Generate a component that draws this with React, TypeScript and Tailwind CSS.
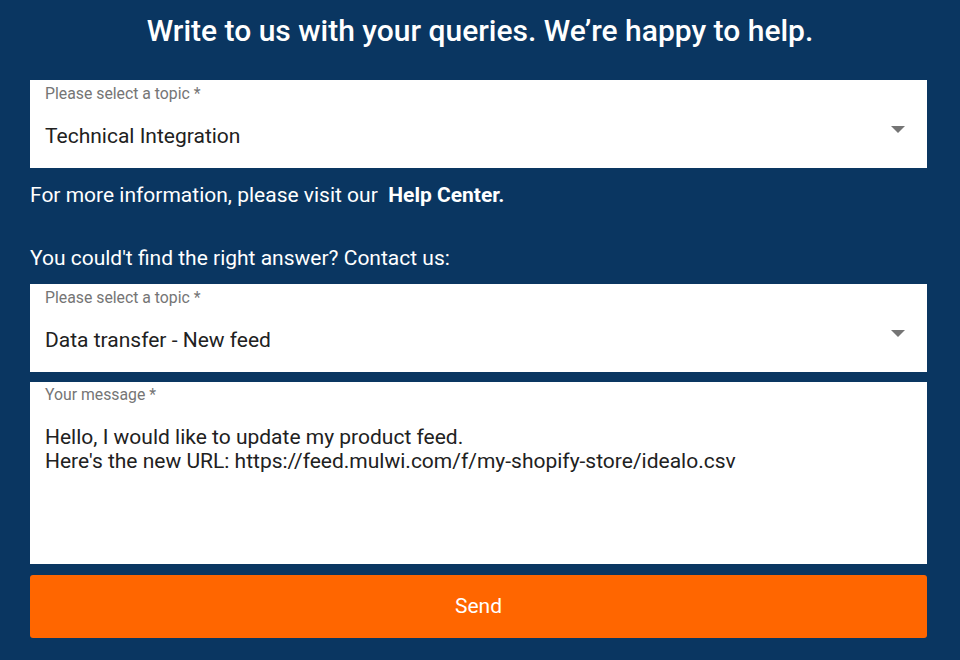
import React from 'react';

const font = { fontFamily: 'Roboto, "Liberation Sans", sans-serif' };

function Arrow() {
  return (
    <svg width="14" height="7" viewBox="0 0 14 7" className="absolute right-[22px] top-[46px]">
      <path d="M0 0 L14 0 L7 7 Z" fill="#757575" />
    </svg>
  );
}

function FakeSelect({ label, value }: { label: string; value: string }) {
  return (
    <div className="relative h-[88px] w-full bg-white">
      <div className="pl-[15px] pt-[4px] text-[15.8px] leading-[19px] text-[#757575]">{label}</div>
      <div className="pl-[15px] pt-[21px] text-[21px] leading-[25px] text-[#212121]">{value}</div>
      <Arrow />
    </div>
  );
}

export default function App() {
  return (
    <div className="min-h-[660px] w-[960px] bg-[#0a3661]" style={font}>
      <div className="flex h-[80px] items-center justify-center pb-[18px]">
        <h1 className="text-[30px] font-medium leading-[36px] text-white">
          Write to us with your queries. We’re happy to help.
        </h1>
      </div>

      <div className="ml-[30px] flex w-[897px] flex-col">
        <FakeSelect label="Please select a topic *" value="Technical Integration" />

        <p className="mt-[15px] text-[21px] leading-[24px] text-white">
          For more information, please visit our&nbsp; <span className="font-bold">Help Center.</span>
        </p>

        <p className="mt-[39px] text-[21px] leading-[24px] text-white">
          You could't find the right answer? Contact us:
        </p>

        <div className="mt-[14px]">
          <FakeSelect label="Please select a topic *" value="Data transfer - New feed" />
        </div>

        <div className="mt-[10px] h-[182px] w-full bg-white">
          <div className="pl-[15px] pt-[3px] text-[15.8px] leading-[19px] text-[#757575]">Your message *</div>
          <div className="pl-[15px] pt-[21px] text-[21px] leading-[24px] text-[#212121]">
            Hello, I would like to update my product feed.
            <br />
            Here's the new URL: https://feed.mulwi.com/f/my-shopify-store/idealo.csv
          </div>
        </div>

        <button className="mt-[11px] flex h-[63px] w-full items-center justify-center rounded-[3px] bg-[#ff6600] text-[21px] text-white">
          Send
        </button>
      </div>
    </div>
  );
}
